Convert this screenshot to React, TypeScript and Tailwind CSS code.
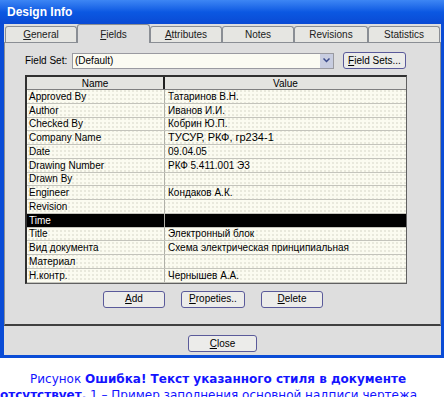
import React from "react";

const rows: [string, string][] = [
  ["Approved By", "Татаринов В.Н."],
  ["Author", "Иванов И.И."],
  ["Checked By", "Кобрин Ю.П."],
  ["Company Name", "ТУСУР,  РКФ,  гр234-1"],
  ["Date", "09.04.05"],
  ["Drawing Number", "РКФ 5.411.001 Э3"],
  ["Drawn By", ""],
  ["Engineer", "Кондаков А.К."],
  ["Revision", ""],
  ["Time", ""],
  ["Title", "Электронный блок"],
  ["Вид документа", "Схема электрическая принципиальная"],
  ["Материал", ""],
  ["Н.контр.", "Чернышев А.А."],
];

const tabs: { label: React.ReactNode; w: string; active?: boolean }[] = [
  { label: <><span className="underline">G</span>eneral</>, w: "w-[72px]" },
  { label: <><span className="underline">F</span>ields</>, w: "w-[73px]", active: true },
  { label: <><span className="underline">A</span>ttributes</>, w: "w-[72px]" },
  { label: <>Notes</>, w: "w-[72px]" },
  { label: <>Revisions</>, w: "w-[74px]" },
  { label: <>Statistics</>, w: "w-[72px]" },
];

function Btn({ children, w }: { children: React.ReactNode; w: string }) {
  return (
    <div
      className={`${w} h-[17px] flex items-center justify-center rounded-[3px] border border-[#5a5a9a] bg-[#ececea] text-[10px] text-black leading-none`}
    >
      {children}
    </div>
  );
}

export default function App() {
  return (
    <div
      className="w-[444px] h-[397px] overflow-hidden bg-white"
      style={{ fontFamily: '"Liberation Sans", Arial, sans-serif' }}
    >
      {/* Window */}
      <div className="h-[358px] flex flex-col bg-[#0a4cd6]">
        <div className="h-[24px] flex items-center px-[7px] bg-gradient-to-b from-[#3d86f4] via-[#0b58e2] to-[#0a4ad4] text-white font-bold text-[12px]">
          Design Info
        </div>
        <div className="flex-1 ml-[4px] mr-[3px] mb-[3px] bg-[#dedede] flex flex-col">
          {/* Tabs */}
          <div className="h-[18px] flex items-end pl-[1px] relative z-10">
            {tabs.map((t, i) => (
              <div
                key={i}
                className={`${t.w} flex items-center justify-center text-[10px] text-[#202020] rounded-t-[3px] border-t border-l border-r border-[#8a8e94] ${
                  t.active ? "h-[19px] -mb-px bg-[#dedede]" : "h-[16px] bg-[#e6e6e2]"
                }`}
              >
                <span>{t.label}</span>
              </div>
            ))}
          </div>
          {/* Panel */}
          <div className="h-[284px] border border-[#8a8e94] border-b-[#404040] border-b-2 flex flex-col pl-[20px] pr-[33px]">
            {/* Field set row */}
            <div className="mt-[9px] h-[17px] flex items-center">
              <div className="w-[47px] text-[10px] text-black">Field Set:</div>
              <div className="w-[262px] h-[16px] flex items-center border border-[#9a9aa0] bg-[#fbfbf2]">
                <div className="flex-1 pl-[2px] text-[10px] text-black">(Default)</div>
                <div className="w-[13px] h-[14px] bg-[#c8cde0] flex items-center justify-center">
                  <svg width="7" height="5" viewBox="0 0 7 5">
                    <path d="M0.5 0.5 L3.5 3.5 L6.5 0.5" stroke="#3a4a8a" strokeWidth="1.5" fill="none" />
                  </svg>
                </div>
              </div>
              <div className="ml-[9px]">
                <Btn w="w-[63px]">
                  <span>
                    <span className="underline">F</span>ield Sets...
                  </span>
                </Btn>
              </div>
            </div>
            {/* Table */}
            <div className="mt-[6px] w-[382px] border-t-2 border-l-2 border-[#303030] border-r border-b border-r-[#606060] border-b-[#606060] bg-[#fbfbf0] bg-[image:radial-gradient(#d2d2c4_0.6px,transparent_0.8px)] bg-[length:4px_4px]">
              <div className="h-[13px] flex border-b border-[#808080] bg-[#e4e4e0] text-[10px] text-black">
                <div className="w-[138px] flex items-center justify-center border-r-2 border-[#202020]">Name</div>
                <div className="flex-1 flex items-center justify-center">Value</div>
              </div>
              {rows.map(([n, v], i) => {
                const sel = n === "Time";
                return (
                  <div
                    key={i}
                    className={`h-[13.75px] flex border-b border-[#c4c4bc] text-[10px] ${
                      sel ? "bg-black text-white" : "text-black"
                    }`}
                  >
                    <div className="w-[138px] flex items-center pl-[2px] border-r border-[#b0b0a8] whitespace-nowrap">
                      {n}
                    </div>
                    <div
                      className={`flex-1 flex items-center pl-[3px] whitespace-nowrap ${
                        n === "Company Name" ? "text-[11px]" : ""
                      }`}
                    >
                      {v}
                    </div>
                  </div>
                );
              })}
            </div>
            {/* Buttons */}
            <div className="mt-[7px] flex pl-[78px] gap-[16px]">
              <Btn w="w-[62px]">
                <span>
                  <span className="underline">A</span>dd
                </span>
              </Btn>
              <Btn w="w-[64px]">
                <span>
                  <span className="underline">P</span>ropeties..
                </span>
              </Btn>
              <Btn w="w-[62px]">
                <span>
                  <span className="underline">D</span>elete
                </span>
              </Btn>
            </div>
          </div>
          {/* Close */}
          <div className="flex-1 flex items-start justify-center pt-[9px]">
            <Btn w="w-[69px]">
              <span>
                <span className="underline">C</span>lose
              </span>
            </Btn>
          </div>
        </div>
      </div>
      {/* Caption */}
      <div
        className="pt-[13px] text-[12px] leading-[16px] text-[#1414ff]"
        style={{ fontFamily: '"DejaVu Sans", "Liberation Sans", sans-serif' }}
      >
        <div className="pl-[30px] whitespace-nowrap">
          Рисунок <span className="font-bold">Ошибка! Текст указанного стиля в документе</span>
        </div>
        <div className="whitespace-nowrap">
          <span className="font-bold">отсутствует.</span> 1 – Пример заполнения основной надписи чертежа
        </div>
      </div>
    </div>
  );
}
